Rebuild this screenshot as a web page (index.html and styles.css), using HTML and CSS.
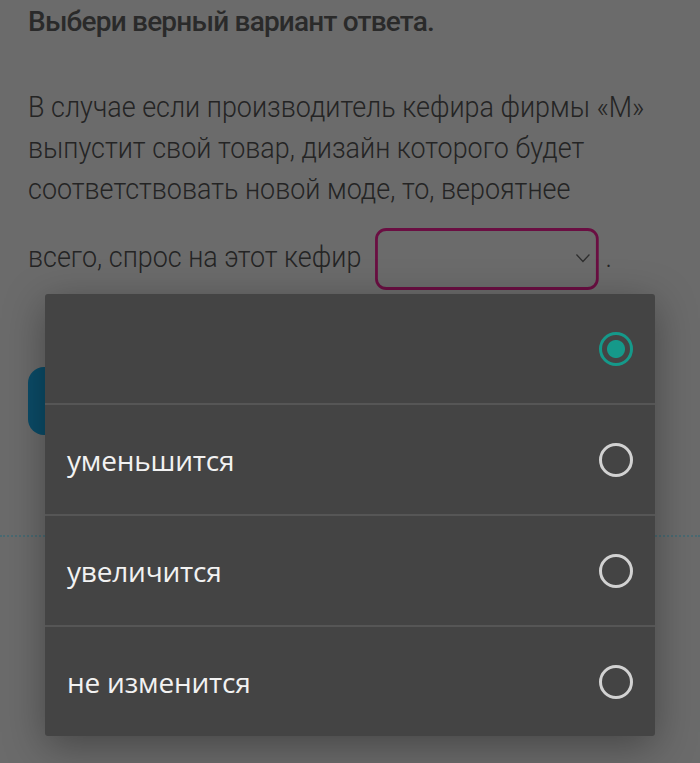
FILE: index.html
```html
<!DOCTYPE html>
<html>
<head>
  <meta charset="UTF-8">
  <title>Задание</title>
  <link rel="stylesheet" href="styles.css">
</head>
<body>
  <div class="page">
    <h2 class="task-title">Выбери верный вариант ответа.</h2>

    <p class="task-text">
      В случае если производитель кефира фирмы «М» выпустит свой товар, дизайн которого будет соответствовать новой моде, то, вероятнее
      <span class="last-line">всего, спрос на этот кефир
        <span class="select-box">
          <svg class="chevron" width="16" height="10" viewBox="0 0 16 10" fill="none" stroke="currentColor" stroke-width="1.4">
            <polyline points="1 1.5 8 8.5 15 1.5"></polyline>
          </svg>
        </span> .</span>
    </p>

    <button class="check-button">Проверить</button>

    <div class="divider"></div>
  </div>

  <!-- Dropdown options (opened select) -->
  <div class="option-list">
    <div class="option selected">
      <span class="option-label"></span>
      <span class="radio"></span>
    </div>
    <div class="option">
      <span class="option-label">уменьшится</span>
      <span class="radio"></span>
    </div>
    <div class="option">
      <span class="option-label">увеличится</span>
      <span class="radio"></span>
    </div>
    <div class="option">
      <span class="option-label">не изменится</span>
      <span class="radio"></span>
    </div>
  </div>
</body>
</html>
```

FILE: styles.css
```css
html, body {
  margin: 0;
  height: 100%;
}
body {
  background-color: #6b6b6b;
  font-family: Roboto, sans-serif;
  overflow: hidden;
  position: relative;
}
.page {
  padding: 0 28px;
}
.task-title {
  margin: 0;
  padding-top: 6px;
  font-size: 28px;
  font-weight: 500;
  line-height: 32px;
  letter-spacing: -0.8px;
  color: #2a2a2a;
}
/* narrow face: Roboto squeezed to condensed width */
.task-text {
  width: 694px;
  margin: 49px 0 0;
  font-size: 29px;
  font-weight: 300;
  line-height: 41px;
  color: #242424;
  transform: scaleX(0.928);
  transform-origin: left top;
}
.last-line {
  display: block;
  margin-top: 18px;
  white-space: nowrap;
}
.select-box {
  display: inline-block;
  box-sizing: border-box;
  width: 241px;
  height: 62px;
  margin-left: 8px;
  border: 3px solid #6a0e42;
  border-left-width: 3.2px;
  border-right-width: 3.2px;
  border-radius: 12px / 11px;
  vertical-align: middle;
  position: relative;
  color: #2e2e2e;
}
.chevron {
  position: absolute;
  right: 6px;
  top: 22px;
}
.check-button {
  display: block;
  width: 220px;
  height: 68px;
  margin-top: 77px;
  border: none;
  border-radius: 16px;
  background-color: #0b4c68;
  color: #bbb;
  font-size: 20px;
}
.divider {
  margin: 100px -28px 0;
  border-top: 2px dotted #4a6a72;
}

/* opened dropdown */
.option-list {
  position: absolute;
  left: 45px;
  top: 294px;
  width: 610px;
  background-color: #444444;
  border-radius: 3px;
  box-shadow: 0 10px 40px rgba(0, 0, 0, 0.35);
  font-family: "Open Sans", sans-serif;
}
.option {
  display: flex;
  align-items: center;
  justify-content: space-between;
  height: 109px;
  padding: 0 22px;
  border-top: 2px solid #565656;
}
.option:first-child {
  border-top: none;
}
.option-label {
  font-size: 28px;
  letter-spacing: -0.2px;
  color: #f2f2f2;
}
.radio {
  box-sizing: border-box;
  width: 34px;
  height: 34px;
  border: 3px solid #d2d2d2;
  border-radius: 50%;
}
.option.selected .radio {
  border-color: #15998a;
  background: radial-gradient(circle, #15998a 0 8.5px, transparent 9.5px);
}
```
